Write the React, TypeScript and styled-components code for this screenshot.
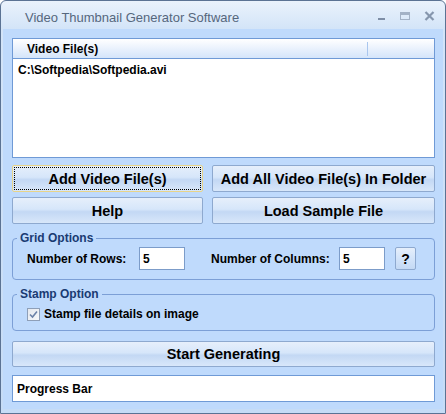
import React from 'react';
import styled, { createGlobalStyle } from 'styled-components';

const GlobalStyle = createGlobalStyle`
  html, body {
    margin: 0;
    padding: 0;
    background: #ffffff;
  }
  * {
    box-sizing: border-box;
  }
`;

const Window = styled.div`
  width: 446px;
  height: 414px;
  display: flex;
  flex-direction: column;
  border: 1px solid #5b7394;
  border-radius: 6px 6px 0 0;
  overflow: hidden;
  background: linear-gradient(#eaf2fc, #d3e4f8 28px, #c6dcf6);
  font-family: 'Liberation Sans', Arial, sans-serif;
  color: #000;
`;

const TitleBar = styled.div`
  height: 28px;
  flex: none;
  display: flex;
  align-items: center;
  padding: 0 0 0 24px;
`;

const Title = styled.div`
  flex: 1;
  font-size: 13px;
  color: #56677d;
  padding-top: 4px;
`;

const Controls = styled.div`
  display: flex;
  align-items: center;
  gap: 14px;
  padding: 2px 10px 0 0;
`;

const Client = styled.div`
  flex: 1;
  margin: 0 2px 4px 2px;
  padding: 9px 8px 0 9px;
  background: #bfdafc;
  display: flex;
  flex-direction: column;
`;

const ListView = styled.div`
  height: 120px;
  flex: none;
  border: 1px solid #6f9ad6;
  background: #ffffff;
`;

const ListHeader = styled.div`
  height: 20px;
  display: flex;
  align-items: center;
  background: linear-gradient(#ffffff, #eef4fd 40%, #d4e5fa);
  border-bottom: 1px solid #6f9ad6;
  font-size: 12px;
  font-weight: bold;
`;

const HeaderCell = styled.div<{ $w?: number }>`
  width: ${(p) => (p.$w ? `${p.$w}px` : 'auto')};
  flex: ${(p) => (p.$w ? 'none' : '1')};
  height: 14px;
  line-height: 14px;
  padding-left: 14px;
  border-right: ${(p) => (p.$w ? '1px solid #a9c6ee' : 'none')};
`;

const ListItem = styled.div`
  font-size: 12px;
  font-weight: bold;
  padding: 4px 0 0 5px;
  line-height: 14px;
`;

const ButtonGrid = styled.div`
  margin-top: 7px;
  display: grid;
  grid-template-columns: 191px 1fr;
  grid-auto-rows: 27px;
  column-gap: 9px;
  row-gap: 5px;
`;

const Button = styled.button<{ $focus?: boolean }>`
  height: 27px;
  margin: 0;
  padding: 0;
  font-family: 'Liberation Sans', Arial, sans-serif;
  font-size: 14.5px;
  font-weight: bold;
  color: #000;
  border: 1px solid ${(p) => (p.$focus ? '#e8d489' : '#8ea9cf')};
  border-radius: 2px;
  background: linear-gradient(#e6effb, #d6e6fa 45%, #c3d8f4 55%, #d8e7fa);
  outline: ${(p) => (p.$focus ? '1px dotted #000' : 'none')};
  outline-offset: -3px;
  cursor: pointer;
`;

const StartButton = styled(Button)`
  height: 26px;
  margin-top: 10px;
  flex: none;
`;

const Group = styled.fieldset`
  margin: 8px 0 0 0;
  padding: 0 10px 0 14px;
  border: 1px solid #7c9fd6;
  border-radius: 4px;
  min-width: 0;
`;

const Legend = styled.legend`
  margin-left: -10px;
  padding: 0 3px;
  font-size: 12px;
  font-weight: bold;
  line-height: 13px;
  color: #1a3a72;
`;

const GridRow = styled.div`
  display: flex;
  align-items: center;
  height: 23px;
  margin: 2px 0 9px 0;
`;

const Label = styled.span<{ $w: number }>`
  width: ${(p) => p.$w}px;
  font-size: 12px;
  font-weight: bold;
  flex: none;
`;

const NumberInput = styled.input`
  width: 46px;
  height: 23px;
  padding: 0 0 0 3px;
  border: 1px solid #7c9cc9;
  background: #ffffff;
  font-family: 'Liberation Sans', Arial, sans-serif;
  font-size: 12px;
  font-weight: bold;
  color: #000;
  flex: none;
`;

const Spacer = styled.span<{ $w: number }>`
  width: ${(p) => p.$w}px;
  flex: none;
`;

const HelpButton = styled.button`
  width: 21px;
  height: 23px;
  margin: 0;
  padding: 0;
  font-family: 'Liberation Sans', Arial, sans-serif;
  font-size: 14px;
  font-weight: bold;
  color: #000;
  border: 1px solid #8ea9cf;
  border-radius: 2px;
  background: linear-gradient(#e6effb, #d3e4fa 50%, #c4d9f4);
`;

const StampRow = styled.label`
  display: flex;
  align-items: center;
  gap: 4px;
  height: 16px;
  margin: 5px 0 8px 0;
  font-size: 12px;
  font-weight: bold;
`;

const CheckBox = styled.span`
  width: 13px;
  height: 13px;
  display: flex;
  align-items: center;
  justify-content: center;
  border: 1px solid #8e9fb8;
  background: linear-gradient(135deg, #e4e8ee, #f6f8fb);
`;

const ProgressBox = styled.div`
  margin-top: 8px;
  height: 27px;
  flex: none;
  display: flex;
  align-items: center;
  padding-left: 4px;
  border: 1px solid #6f9ad6;
  background: #ffffff;
  font-size: 12px;
  font-weight: bold;
`;

const WinGlyph = ({ kind }: { kind: 'min' | 'max' | 'close' }) => {
  if (kind === 'min') {
    return (
      <svg width="9" height="10" viewBox="0 0 9 10">
        <rect x="1" y="7" width="7" height="2" fill="#7e8ea6" />
      </svg>
    );
  }
  if (kind === 'max') {
    return (
      <svg width="10" height="10" viewBox="0 0 10 10">
        <rect x="0.5" y="1.5" width="9" height="7" fill="none" stroke="#a3b2c6" />
        <rect x="1" y="2" width="8" height="2" fill="#a3b2c6" />
      </svg>
    );
  }
  return (
    <svg width="11" height="10" viewBox="0 0 11 10">
      <path d="M1.5 1 L9.5 9 M9.5 1 L1.5 9" stroke="#8696ad" strokeWidth="2.2" />
    </svg>
  );
};

const App = () => {
  return (
    <>
      <GlobalStyle />
      <Window>
        <TitleBar>
          <Title>Video Thumbnail Generator Software</Title>
          <Controls>
            <WinGlyph kind="min" />
            <WinGlyph kind="max" />
            <WinGlyph kind="close" />
          </Controls>
        </TitleBar>
        <Client>
          <ListView>
            <ListHeader>
              <HeaderCell $w={355}>Video File(s)</HeaderCell>
              <HeaderCell />
            </ListHeader>
            <ListItem>C:\Softpedia\Softpedia.avi</ListItem>
          </ListView>

          <ButtonGrid>
            <Button $focus>Add Video File(s)</Button>
            <Button>Add All Video File(s) In Folder</Button>
            <Button>Help</Button>
            <Button>Load Sample File</Button>
          </ButtonGrid>

          <Group>
            <Legend>Grid Options</Legend>
            <GridRow>
              <Label $w={112}>Number of Rows:</Label>
              <NumberInput defaultValue="5" />
              <Spacer $w={26} />
              <Label $w={128}>Number of Columns:</Label>
              <NumberInput defaultValue="5" />
              <Spacer $w={10} />
              <HelpButton>?</HelpButton>
            </GridRow>
          </Group>

          <Group>
            <Legend>Stamp Option</Legend>
            <StampRow>
              <CheckBox>
                <svg width="9" height="9" viewBox="0 0 9 9">
                  <path d="M1 4.5 L3.5 7 L8 1.5" fill="none" stroke="#6b82a8" strokeWidth="1.6" />
                </svg>
              </CheckBox>
              Stamp file details on image
            </StampRow>
          </Group>

          <StartButton>Start Generating</StartButton>

          <ProgressBox>Progress Bar</ProgressBox>
        </Client>
      </Window>
    </>
  );
};

export default App;
